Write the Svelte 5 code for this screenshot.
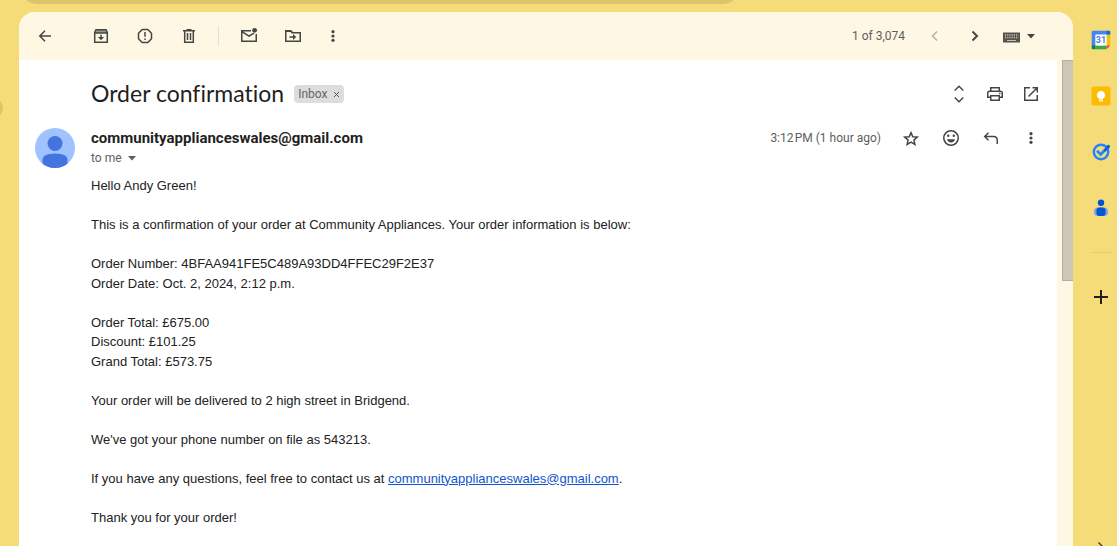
<script>
  const intro = [
    'Hello Andy Green!',
    '',
    'This is a confirmation of your order at Community Appliances. Your order information is below:',
    '',
    'Order Number: 4BFAA941FE5C489A93DD4FFEC29F2E37',
    'Order Date: Oct. 2, 2024, 2:12 p.m.',
    '',
    'Order Total: £675.00',
    'Discount: £101.25',
    'Grand Total: £573.75',
    '',
    'Your order will be delivered to 2 high street in Bridgend.',
    '',
    "We've got your phone number on file as 543213.",
    ''
  ];
</script>

{#snippet dots()}
  <svg viewBox="0 0 20 20"><circle cx="10" cy="5.700" r="1.600" /><circle cx="10" cy="10" r="1.600" /><circle cx="10" cy="14.300" r="1.600" /></svg>
{/snippet}

<div class="app">
  <div class="top"><div class="search"></div></div>
  <div class="left"><span class="nub"></span></div>

  <main>
    <div class="toolbar">
      <button class="back" aria-label="Back"><svg class="line" viewBox="0 0 20 20"><path d="M16 10H5M10 4.800 4.800 10l5.200 5.200" /></svg></button>
      <div class="group">
        <button aria-label="Archive"><svg viewBox="0 0 20 20"><path opacity=".55" d="M4 4h12v3H4z" /><g class="line"><path d="M3.700 6.500V16.250h12.600V6.500L15 3.750H5ZM3.700 7h12.600M10 8.800v4" /></g><path d="M6.900 11h6.200L10 14.200z" /></svg></button>
        <button aria-label="Report spam"><svg class="line" viewBox="0 0 20 20"><path d="M7.200 3.500h5.600l3.700 3.700v5.600l-3.700 3.700H7.200l-3.700-3.700V7.200Z" stroke-linejoin="round" /><path d="M10 6v4.800M10 12.500v1.600" /></svg></button>
        <button aria-label="Delete"><svg class="line" viewBox="0 0 20 20"><path d="M4 4.700h12M7.500 3.700h5M5.700 5v11.250h8.600V5M8.500 7v7M11.500 7v7" /></svg></button>
      </div>
      <span class="divider"></span>
      <div class="group">
        <button aria-label="Mark as unread"><svg viewBox="0 0 20 20"><g class="line"><path d="M12 4.750H2.750v10.500h14.500V8M3 5.700l7 4.500 5-3.100" /></g><circle cx="15.600" cy="4.300" r="2.400" /></svg></button>
        <button aria-label="Move to"><svg viewBox="0 0 20 20"><path d="M2 4h6l2 2H2z" /><g class="line"><path d="M2.750 5v10.250h14.500v-8.500H9L7.500 4.750H2.750ZM6.500 11h5" /></g><path d="M10 8l3.200 3L10 14z" /></svg></button>
      </div>
      <button class="more" aria-label="More">{@render dots()}</button>
      <span class="count">1 of 3,074</span>
      <button class="newer" aria-label="Newer" disabled><svg class="line" viewBox="0 0 20 20"><path d="m12 5.500-4.500 4.500 4.500 4.500" /></svg></button>
      <button class="older" aria-label="Older"><svg class="line strong" viewBox="0 0 20 20"><path d="m7.500 5.500 4.500 4.500-4.500 4.500" /></svg></button>
      <button class="keyboard" aria-label="Input tools">
        <svg viewBox="0 0 20 20"><path d="M1 6.500h17v10H1z" /><path fill="none" stroke="#c9c4b4" stroke-width="1.300" stroke-dasharray="1.200 1" d="M3 9h13.500M3 11.500h13.500" /><path stroke="#c9c4b4" d="M5 14.500h9" /></svg>
      </button>
      <button class="tools" aria-label="Choose input tool"><svg viewBox="0 0 10 10"><path d="M1 3h8L5 7.500z" /></svg></button>
    </div>

    <div class="viewport">
      <article>
        <header class="subject">
          <h1>Order confirmation</h1>
          <span class="chip">Inbox <button aria-label="Remove label Inbox"><svg class="line" viewBox="0 0 8 8"><path d="m1 1 6 6M7 1 1 7" /></svg></button></span>
          <div class="actions">
            <button aria-label="Expand all"><svg class="line" viewBox="0 0 20 20"><path d="m5.700 6.500 4.300-4.200 4.300 4.200M5.700 13.500l4.300 4.200 4.300-4.200" /></svg></button>
            <button aria-label="Print all"><svg class="line" viewBox="0 0 20 20"><path d="M5.750 7V3.750h8.500V7M5.500 13.250H2.750V9q0-1.750 1.750-1.750h11q1.750 0 1.750 1.750v4.250H14.500M5.750 11.750h8.500v4.500h-8.500z" /><path d="M14 9.500h1.500" /></svg></button>
            <button aria-label="In new window"><svg class="line" viewBox="0 0 20 20"><path d="M9 3.750H3.750v12.500h12.500V11M11.500 3.750h4.750V8.500M16 4l-8.500 8.500" /></svg></button>
          </div>
        </header>

        <section class="message">
          <svg class="avatar" viewBox="0 0 40 40"><defs><clipPath id="disc"><circle cx="20" cy="20" r="20" /></clipPath></defs><g clip-path="url(#disc)"><path fill="#a0c2ff" d="M0 0h40v40H0z" /><circle cx="20" cy="15.500" r="7.500" fill="#4374e0" /><path fill="#4374e0" d="M7.500 40v-8q0-6.500 12.500-6.500t12.500 6.500v8z" /></g></svg>
          <div class="content">
            <div class="sender">
              <strong>communityapplianceswales@gmail.com</strong>
              <span class="time">3:12&#8202;PM (1 hour ago)</span>
              <div class="actions wide">
                <button aria-label="Star"><svg class="line" viewBox="0 0 20 20"><path d="m10 4.600 1.800 4.100 4.500.4-3.400 3 1 4.300-3.900-2.300-3.900 2.300 1-4.300-3.400-3 4.500-.4z" /></svg></button>
                <button aria-label="Add reaction"><svg viewBox="0 0 20 20"><circle class="line" cx="10" cy="10" r="7.250" /><circle cx="7.200" cy="7.800" r="1.200" /><circle cx="12.800" cy="7.800" r="1.200" /><path d="M6 11.300h8q-1 3.200-4 3.200t-4-3.200z" /></svg></button>
                <button aria-label="Reply"><svg class="line" viewBox="0 0 20 20"><path d="M7.500 4.700 3.700 8.500l3.800 3.800M4 8.500h8.500q3.750 0 3.750 3.750V16" /></svg></button>
                <button aria-label="More options">{@render dots()}</button>
              </div>
            </div>
            <button class="recipient">to me <svg viewBox="0 0 10 10"><path d="M1 3h8L5 7.500z" /></svg></button>
            <div class="body">
              {#each intro as line}<p>{line}</p>{/each}
              <p>If you have any questions, feel free to contact us at <a href="mailto:communityapplianceswales@gmail.com">communityapplianceswales@gmail.com</a>.</p>
              <p></p>
              <p>Thank you for your order!</p>
            </div>
          </div>
        </section>
      </article>
      <div class="track"><div class="thumb"></div></div>
    </div>
  </main>

  <aside>
    <button aria-label="Calendar"><svg viewBox="0 0 20 20"><path fill="#4285f4" d="M2 .7h14v4.600H4.500v10.700H.7V2Q.7.700 2 .7z" /><path fill="#1967d2" d="M15.500.7H18q1.300 0 1.300 1.300v2.800h-3.800z" /><path fill="#fbbc04" d="M15.500 4.800h3.800V15.500h-3.800z" /><path fill="#34a853" d="M4.500 15.500h11v3.800h-11z" /><path fill="#188038" d="M.7 15.500h3.800v3.800H2Q.7 19.300.7 18z" /><path fill="#ea4335" d="M15.500 15.500h3.800l-3.800 3.800z" /><path fill="#fff" d="M4.500 4.500h11v11h-11z" /><text x="10" y="13.300">31</text></svg></button>
    <button aria-label="Keep"><svg viewBox="0 0 20 20"><rect x=".5" y=".5" width="19" height="19" rx="1.500" fill="#fbbc04" /><path fill="#fff" d="M10 5a4 4 0 0 0-2 7.500V13.500h4v-1A4 4 0 0 0 10 5zM8 14.300h4v1.200H8z" /></svg></button>
    <button aria-label="Tasks"><svg viewBox="0 0 20 20"><circle cx="10" cy="10" r="7.200" fill="none" stroke="#2684fc" stroke-width="2.500" /><path fill="none" stroke="#2684fc" stroke-width="2.800" d="m6 8.800 3.600 3.600 4.400-4.400" /><path fill="none" stroke="#0066da" stroke-width="2.800" d="m13.300 8.700 4-4" /><circle cx="17.200" cy="4.600" r="1.800" fill="#0066da" /></svg></button>
    <button aria-label="Contacts"><svg viewBox="0 0 20 20"><circle cx="10" cy="4.800" r="3.200" fill="#0057cc" /><rect x="3" y="9.500" width="14" height="8.500" rx="4" fill="#7b9ff2" /><rect x="5.500" y="9.500" width="9" height="8.500" rx="3" fill="#0057cc" /></svg></button>
    <span class="rule"></span>
    <button class="add" aria-label="Get add-ons"><svg viewBox="0 0 20 20"><path fill="none" stroke="#1f1f1f" stroke-width="2" d="M10 3v14M3 10h14" /></svg></button>
    <button class="hide" aria-label="Hide side panel"><svg class="line" viewBox="0 0 20 20"><path d="m7.500 4.500 5.500 5.500-5.500 5.500" /></svg></button>
  </aside>
</div>

<style>
  :global(body) { background: #f5dc78; }
  .app {
    display: grid;
    grid-template: 12px minmax(0, 1fr) / 19px minmax(0, 1fr) 44px;
    height: 100vh;
    overflow: hidden;
    color: #1f1f1f;
    font-family: Roboto, sans-serif;
    font-size: 12px;
  }
  button {
    display: flex;
    flex: none;
    align-items: center;
    justify-content: center;
    padding: 0;
    border: 0;
    background: none;
    color: #444746;
    font: inherit;
    cursor: pointer;
  }
  svg { display: block; width: 20px; height: 20px; fill: currentColor; }
  .line { fill: none; stroke: currentColor; stroke-width: 1.5; }
  .strong { stroke-width: 2; }
  .top { grid-column: 1 / 3; padding: 0 340px 0 27px; }
  .search { height: 4px; background: #dcc46c; border-radius: 0 0 12px 12px / 0 0 4px 4px; }
  .left { grid-area: 2 / 1; overflow: hidden; }
  .nub { display: block; width: 20px; height: 20px; margin: 86px 0 0 -17px; border-radius: 50%; background: #dcc46c; }
  main {
    grid-area: 2 / 2;
    display: flex;
    flex-direction: column;
    overflow: hidden;
    background: #fff;
    border-radius: 16px 16px 0 0;
  }
  .toolbar { display: flex; flex: none; align-items: center; height: 48px; padding: 0 37px 0 16px; background: #fdf7e3; }
  .group { display: flex; gap: 24px; }
  .back { margin-right: 36px; }
  .divider { width: 1px; height: 20px; margin: 0 20px 0 19px; background: #e6e1d0; }
  .more { margin-left: 20px; }
  .count { margin-left: auto; color: #5e5e5e; }
  .newer { margin-left: 20px; }
  .newer:disabled { color: #b3afa4; }
  .older { margin-left: 20px; }
  .keyboard { margin-left: 17px; color: #55534c; }
  .tools { margin-left: 4px; }
  .tools svg, .recipient svg { width: 10px; height: 10px; }
  .viewport { display: flex; flex: 1; min-height: 0; }
  article { flex: 1; min-width: 0; overflow: hidden; }
  .track { width: 11px; padding-left: 5px; background: #fdf7e3; }
  .thumb { box-sizing: border-box; height: 221px; background: #cdc6b6; border: solid #b3ae9c; border-width: 1px 0 1px 1px; }
  .subject { display: flex; align-items: center; height: 40px; padding: 14px 16px 14px 72px; }
  h1 { margin: 0; padding-bottom: 2px; font: 400 23px/32px Lato, sans-serif; font-variant-ligatures: none; }
  .chip { display: flex; align-items: center; gap: 6px; height: 18px; margin-left: 10px; padding: 0 4px; border-radius: 4px; background: #ddd; color: #666; }
  .chip svg { width: 7px; height: 7px; }
  .chip .line { stroke-width: 1; }
  .actions { display: flex; gap: 16px; margin-left: auto; }
  .sender .wide { gap: 20px; margin-left: 20px; }
  .message { display: flex; gap: 16px; padding: 0 16px; }
  .avatar { flex: none; width: 40px; height: 40px; }
  .content { flex: 1; min-width: 0; }
  .sender { display: flex; align-items: center; height: 20px; }
  .sender strong { font-size: 15px; }
  .time { margin-left: auto; color: #5e5e5e; }
  .recipient { gap: 5px; height: 20px; color: #5e5e5e; }
  .body { margin-top: 8px; color: #222; font: 13px/1.5 "Liberation Sans", Arial, sans-serif; }
  .body p { min-height: 1.5em; margin: 0; }
  .body a { color: #15c; }
  aside { grid-area: 1 / 3 / 3; display: flex; flex-direction: column; align-items: flex-end; padding-top: 24px; }
  aside button { width: 32px; height: 32px; margin-bottom: 24px; }
  aside text { fill: #4285f4; font: 700 9px Roboto, sans-serif; text-anchor: middle; }
  .rule { width: 20px; height: 1px; margin: 4px 6px 28px 0; background: #e0cb78; }
  aside .hide { margin: auto 0 -18px; }
</style>
